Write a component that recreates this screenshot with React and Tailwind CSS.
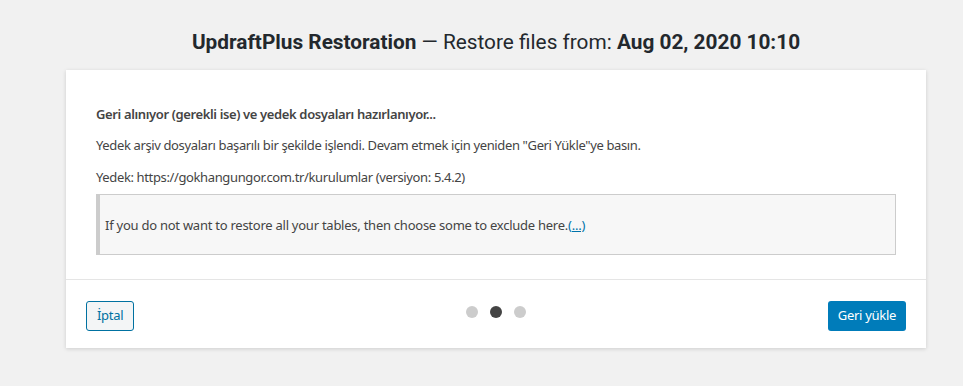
export default function App() {
  return (
    <div className="min-h-[386px] w-[963px] bg-[#f1f1f1] text-[#23282d]" style={{ fontFamily: '"Noto Sans", "Open Sans", sans-serif' }}>
      <div className="pl-[66px] pt-[28px]">
        <div className="w-[860px]">
          <h1 className="text-center text-[20.8px] leading-[28px] text-[#23282d]" style={{ fontFamily: 'Roboto, "Noto Sans", sans-serif' }}>
            <span className="font-bold">UpdraftPlus Restoration</span> — Restore files from: <span className="font-bold">Aug 02, 2020 10:10</span>
          </h1>

          <div className="mt-[14px] bg-white shadow-[0_1px_4px_rgba(0,0,0,0.15)]">
            <div className="px-[30px] pt-[34px] pb-[24px] text-[13px] leading-[20px] tracking-[-0.37px] text-[#444]">
              <p className="font-semibold">Geri alınıyor (gerekli ise) ve yedek dosyaları hazırlanıyor...</p>
              <p className="mt-[11px]">Yedek arşiv dosyaları başarılı bir şekilde işlendi. Devam etmek için yeniden "Geri Yükle"ye basın.</p>
              <p className="mt-[12px]">Yedek: https://gokhangungor.com.tr/kurulumlar (versiyon: 5.4.2)</p>
              <div className="mt-[7px] flex h-[61px] items-center border border-l-4 border-[#ccc] bg-[#f7f7f7] pl-[5px]">
                <p className="tracking-[-0.25px]">
                  If you do not want to restore all your tables, then choose some to exclude here.<a className="text-[#0073aa] underline">(...)</a>
                </p>
              </div>
            </div>
            <div className="border-t border-[#e5e5e5]" />
            <div className="grid grid-cols-3 items-start px-[20px] pt-[21px] pb-[17px] text-[13px] tracking-[-0.3px]">
              <button className="h-[30px] justify-self-start rounded-[3px] border border-[#0071a1] bg-[#f3f5f6] px-[10px] text-[#0071a1]">İptal</button>
              <div className="mt-[5px] flex gap-[12px] justify-self-center">
                <span className="h-[12px] w-[12px] rounded-full bg-[#ccc]" />
                <span className="h-[12px] w-[12px] rounded-full bg-[#444]" />
                <span className="h-[12px] w-[12px] rounded-full bg-[#ccc]" />
              </div>
              <button className="h-[30px] justify-self-end rounded-[3px] bg-[#007cba] px-[10px] text-white">Geri yükle</button>
            </div>
          </div>
        </div>
      </div>
    </div>
  );
}
